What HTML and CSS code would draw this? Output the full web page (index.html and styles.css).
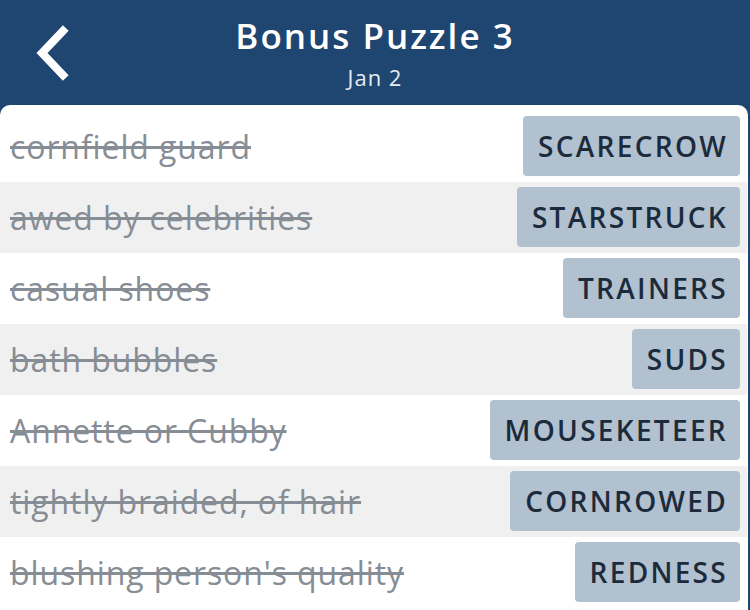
FILE: index.html
```html
<!DOCTYPE html>
<html lang="en">
<head>
  <meta charset="UTF-8" />
  <meta name="viewport" content="width=device-width, initial-scale=1.0"/>
  <title>Bonus Puzzle 3</title>
  <link rel="stylesheet" href="styles.css">
</head>
<body>

<div class="top-bar">
  <button class="back-btn" aria-label="Back">
    <svg width="40" height="56" viewBox="0 0 40 56">
      <polyline points="31,6 10,28 31,50" fill="none" stroke="#fff" stroke-width="8" stroke-linecap="square" stroke-linejoin="miter"/>
    </svg>
  </button>
  <div class="title-block">
    <h1>Bonus Puzzle 3</h1>
    <div class="date">Jan 2</div>
  </div>
</div>

<div class="clue-list">
  <div class="clue-row">
    <span class="clue">cornfield guard</span>
    <span class="answer">SCARECROW</span>
  </div>
  <div class="clue-row alt">
    <span class="clue">awed by celebrities</span>
    <span class="answer">STARSTRUCK</span>
  </div>
  <div class="clue-row">
    <span class="clue">casual shoes</span>
    <span class="answer">TRAINERS</span>
  </div>
  <div class="clue-row alt">
    <span class="clue">bath bubbles</span>
    <span class="answer">SUDS</span>
  </div>
  <div class="clue-row">
    <span class="clue">Annette or Cubby</span>
    <span class="answer">MOUSEKETEER</span>
  </div>
  <div class="clue-row alt">
    <span class="clue">tightly braided, of hair</span>
    <span class="answer">CORNROWED</span>
  </div>
  <div class="clue-row">
    <span class="clue">blushing person's quality</span>
    <span class="answer">REDNESS</span>
  </div>
</div>

</body>
</html>
```

FILE: styles.css
```css
body {
  font-family: 'Open Sans', Lato, sans-serif;
  background: #1f4571;
  margin: 0;
  padding: 0;
  height: 610px;
  overflow: hidden;
}
.top-bar {
  position: relative;
  height: 105px;
  display: flex;
  justify-content: center;
  color: #fff;
}
.back-btn {
  position: absolute;
  left: 32px;
  top: 25px;
  background: none;
  border: none;
  padding: 0;
  cursor: pointer;
}
.title-block {
  text-align: center;
  padding-top: 12px;
}
.title-block h1 {
  margin: 0;
  font-size: 35px;
  font-weight: 600;
  letter-spacing: 2px;
  line-height: 48px;
}
.date {
  font-size: 22px;
  letter-spacing: 1px;
  line-height: 28px;
  margin-top: 3px;
  color: #e4ebf3;
}
.clue-list {
  background: #fff;
  margin-right: 2px;
  border-radius: 10px 10px 0 0;
  padding-top: 6px;
  height: 505px;
}
.clue-row {
  height: 71px;
  display: flex;
  align-items: center;
  justify-content: space-between;
  padding: 0 7px 0 10px;
  margin-right: 1px;
}
.clue-row.alt {
  background: #f0f0f0;
}
.clue {
  font-size: 32px;
  letter-spacing: 0.9px;
  color: #878d95;
  text-decoration: line-through;
  white-space: nowrap;
}
.answer {
  background: #b1c1cf;
  color: #1c2b3c;
  font-size: 28px;
  font-weight: 600;
  letter-spacing: 2.3px;
  height: 60px;
  line-height: 60px;
  padding: 0 12px 0 15px;
  border-radius: 4px;
  margin-top: -1px;
}
```
